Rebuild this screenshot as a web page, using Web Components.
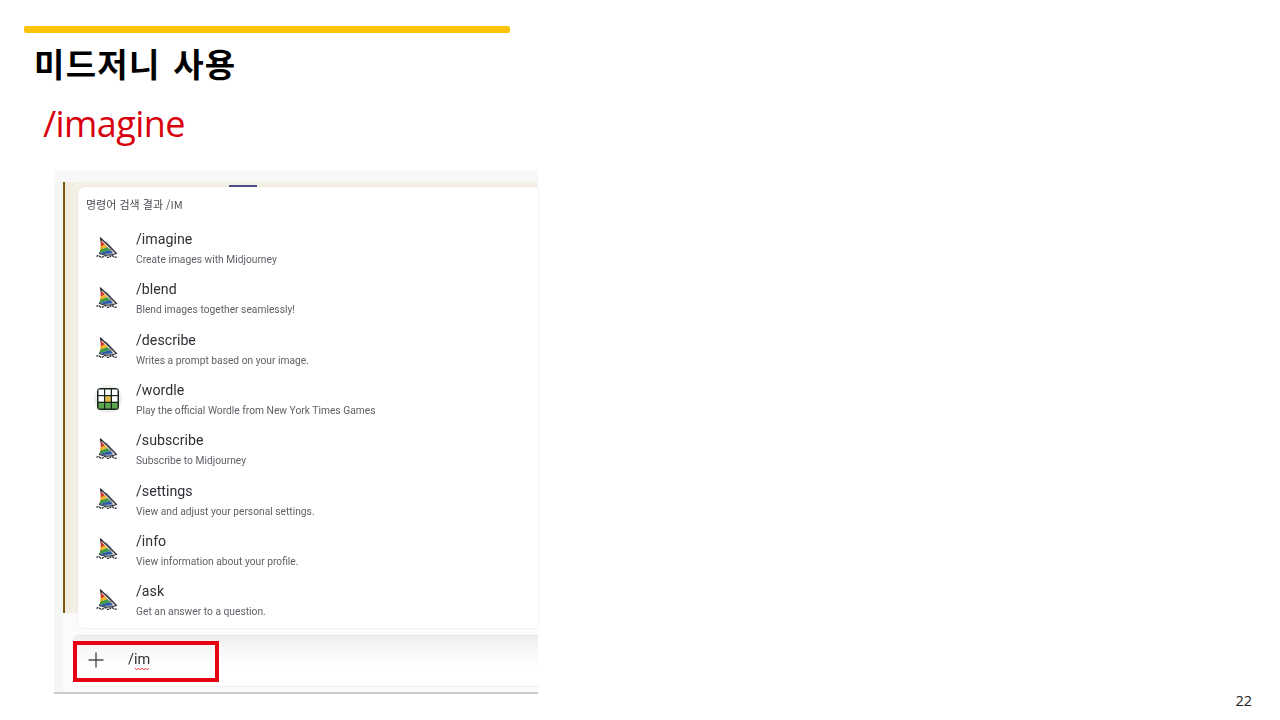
<!doctype html>
<html lang="ko"><head><meta charset="utf-8"><title>미드저니 사용</title>
<style>html,body{margin:0;background:#fff}body{font-family:"Noto Sans","Noto Sans CJK KR",sans-serif}</style></head>
<body>
<slide-page>
  <slide-heading slot="head" title="미드저니 사용" sub="/imagine"></slide-heading>
  <discord-shot slot="shot">
    <cmd-item icon="sail" name="/imagine" desc="Create images with Midjourney"></cmd-item>
    <cmd-item icon="sail" name="/blend" desc="Blend images together seamlessly!"></cmd-item>
    <cmd-item icon="sail" name="/describe" desc="Writes a prompt based on your image."></cmd-item>
    <cmd-item icon="wordle" name="/wordle" desc="Play the official Wordle from New York Times Games"></cmd-item>
    <cmd-item icon="sail" name="/subscribe" desc="Subscribe to Midjourney"></cmd-item>
    <cmd-item icon="sail" name="/settings" desc="View and adjust your personal settings."></cmd-item>
    <cmd-item icon="sail" name="/info" desc="View information about your profile."></cmd-item>
    <cmd-item icon="sail" name="/ask" desc="Get an answer to a question."></cmd-item>
  </discord-shot>
  <span slot="page">22</span>
</slide-page>
<script>
const def=(n,html)=>customElements.define(n,class extends HTMLElement{
  constructor(){super();this.attachShadow({mode:'open'}).innerHTML=typeof html==='function'?html(this):html}
  connectedCallback(){if(typeof html==='function')this.shadowRoot.innerHTML=html(this)}
});
def('slide-page',`<style>
:host{display:flex;flex-direction:column;width:1280px;height:720px;box-sizing:border-box;padding:26px 28px 14px 24px;overflow:hidden;background:#fff}
.shot{margin:21px 0 0 30px}
.page{margin-top:auto;align-self:flex-end;font:14.500px/14px "Open Sans",sans-serif;color:#222}
</style><slot name="head"></slot><div class="shot"><slot name="shot"></slot></div><div class="page"><slot name="page"></slot></div>`);
def('slide-heading',h=>`<style>
:host{display:block;width:486px}
.bar{height:7px;background:#fdc30a;border-radius:2px}
h1{margin:7px 0 0 10px;font:700 33px/46px "Noto Sans CJK KR",sans-serif;letter-spacing:1.3px;word-spacing:2px;color:#000}
p{margin:13px 0 0 19px;font:400 36px/50px "Open Sans","Noto Sans",sans-serif;color:#d9000d;letter-spacing:-.6px}
</style><div class="bar"></div><h1>${h.getAttribute('title')}</h1><p>${h.getAttribute('sub')}</p>`);
def('discord-shot',`<style>
:host{display:block;width:484px;height:524px;background:#f4f5f5;position:relative;filter:blur(.35px);border-bottom:2px solid #c9cacb;box-sizing:border-box;color:#2e3035}
.top{height:12px;background:#f8f8f8}
.stage{margin-left:9px;border-left:2px solid #7d5a0c;box-sizing:border-box;background:linear-gradient(90deg,#f1ebdf,#f6f1e6 14px);height:431px}
.tick{position:absolute;left:175px;top:15px;width:28px;height:2px;background:#4d4f8e}
.card{position:absolute;left:24px;top:17px;right:0;background:#fff;border-radius:6px 0 0 6px;height:441px;box-shadow:0 0 2px #0002;box-sizing:border-box;padding:10px 0 0 8px}
.hd{font:11px/15px "Noto Sans CJK KR",sans-serif;color:#4a4c52}
.list{display:grid;grid-auto-rows:50.3px;margin:11px 0 0 -8px}
.outer{position:absolute;left:9px;right:0;top:443px;height:79px;background:#fbfbfb}
.inputwrap{position:absolute;left:18px;right:0;top:465px;height:52px;box-sizing:border-box;border-radius:8px 0 0 8px;background:linear-gradient(#efeff0,#fff 60%);border-top:1px solid #e4e5e6;border-bottom:1px solid #eee;display:flex;align-items:center;padding-left:16px}
.plus{width:16px;height:16px;flex:none;margin-top:-2px}
.txt{margin-left:24px;font:14.500px/20px Roboto,sans-serif;color:#2e3035;position:relative;margin-top:-2px}
.wave{position:absolute;left:7px;bottom:-1px;width:14px;height:4px}
.redbox{position:absolute;left:1px;top:5px;width:146px;height:41px;border:4px solid #e60012;box-sizing:border-box}
</style>
<div class="top"></div>
<div class="stage"></div>
<div class="tick"></div>
<div class="outer"></div>
<div class="card">
  <div class="hd">명령어 검색 결과 /IM</div>
  <div class="list"><slot></slot></div>
</div>
<div class="inputwrap">
  <svg class="plus" viewBox="0 0 16 16"><path d="M8 .5v15M.5 8h15" stroke="#4c4e52" stroke-width="1.4" fill="none"/></svg>
  <span class="txt">/im<svg class="wave" viewBox="0 0 15 4"><path d="M0 1l1.900 2 1.900-2 1.900 2 1.900-2 1.900 2 1.900-2 1.900 2 1.900-2" stroke="#d8232a" fill="none" stroke-width="1"/></svg></span>
  <div class="redbox"></div>
</div>`);
const sail=`<svg width="24" height="22" viewBox="0 0 24 22">
<path d="M4.500 1L20.500 16.500C15 18.500 8 18.500 3.500 16.500L6.500 11Z" fill="#efefea" stroke="#2d3038" stroke-width="1.300" stroke-linejoin="round"/>
<path d="M5 3.500L9 7.500 4.500 9.500Z" fill="#d5392b"/><path d="M9 7.500L11.500 10 4 13 4.500 9.500Z" fill="#f0b429"/>
<path d="M11.500 10l2.500 3L3.800 16l.2-3Z" fill="#3f9a44"/><path d="M14 13l3 3.500-10 .5-3.200-1Z" fill="#2c58a8"/>
<path d="M10 4.500L18.500 14M13.500 11.500l3 4" stroke="#6f727a" stroke-width="1" fill="none"/>
<path d="M.5 19.500q1.700-1.700 3.400 0t3.400 0 3.400 0 3.400 0 3.400 0 3.400 0" stroke="#2d3038" stroke-width="1.300" fill="none" stroke-dasharray="2.200 .7"/>
</svg>`;
const wordle=`<svg width="28" height="28" viewBox="0 0 28 28">
<circle cx="14" cy="14" r="14" fill="#efefed"/>
<rect x="3" y="3" width="22" height="22" rx="3.500" fill="#17261b"/>
<g fill="#fff"><rect x="4.500" y="4.500" width="5.500" height="5.500"/><rect x="11.200" y="4.500" width="5.500" height="5.500"/><rect x="18" y="4.500" width="5.500" height="5.500"/><rect x="4.500" y="11.200" width="5.500" height="5.500"/><rect x="18" y="11.200" width="5.500" height="5.500"/></g>
<rect x="11.200" y="11.200" width="5.500" height="5.500" fill="#e5bd4a"/>
<g fill="#5da54f"><rect x="4.500" y="18" width="5.500" height="5.500"/><rect x="11.200" y="18" width="5.500" height="5.500"/><rect x="18" y="18" width="5.500" height="5.500"/></g>
</svg>`;
def('cmd-item',h=>`<style>
:host{display:grid;grid-template-columns:58px 1fr;align-items:center;height:50.3px}
.ic{display:flex;justify-content:center;width:58px;box-sizing:border-box;padding-left:1px;margin-bottom:1px}
.t{font:14.200px/20px Roboto,sans-serif;color:#2e3035}
.d{font:10.250px/15px Roboto,sans-serif;color:#5f6167;margin-top:3px}
</style><div class="ic">${h.getAttribute('icon')==='wordle'?wordle:sail}</div><div><div class="t">${h.getAttribute('name')}</div><div class="d">${h.getAttribute('desc')}</div></div>`);
</script>
</body></html>
